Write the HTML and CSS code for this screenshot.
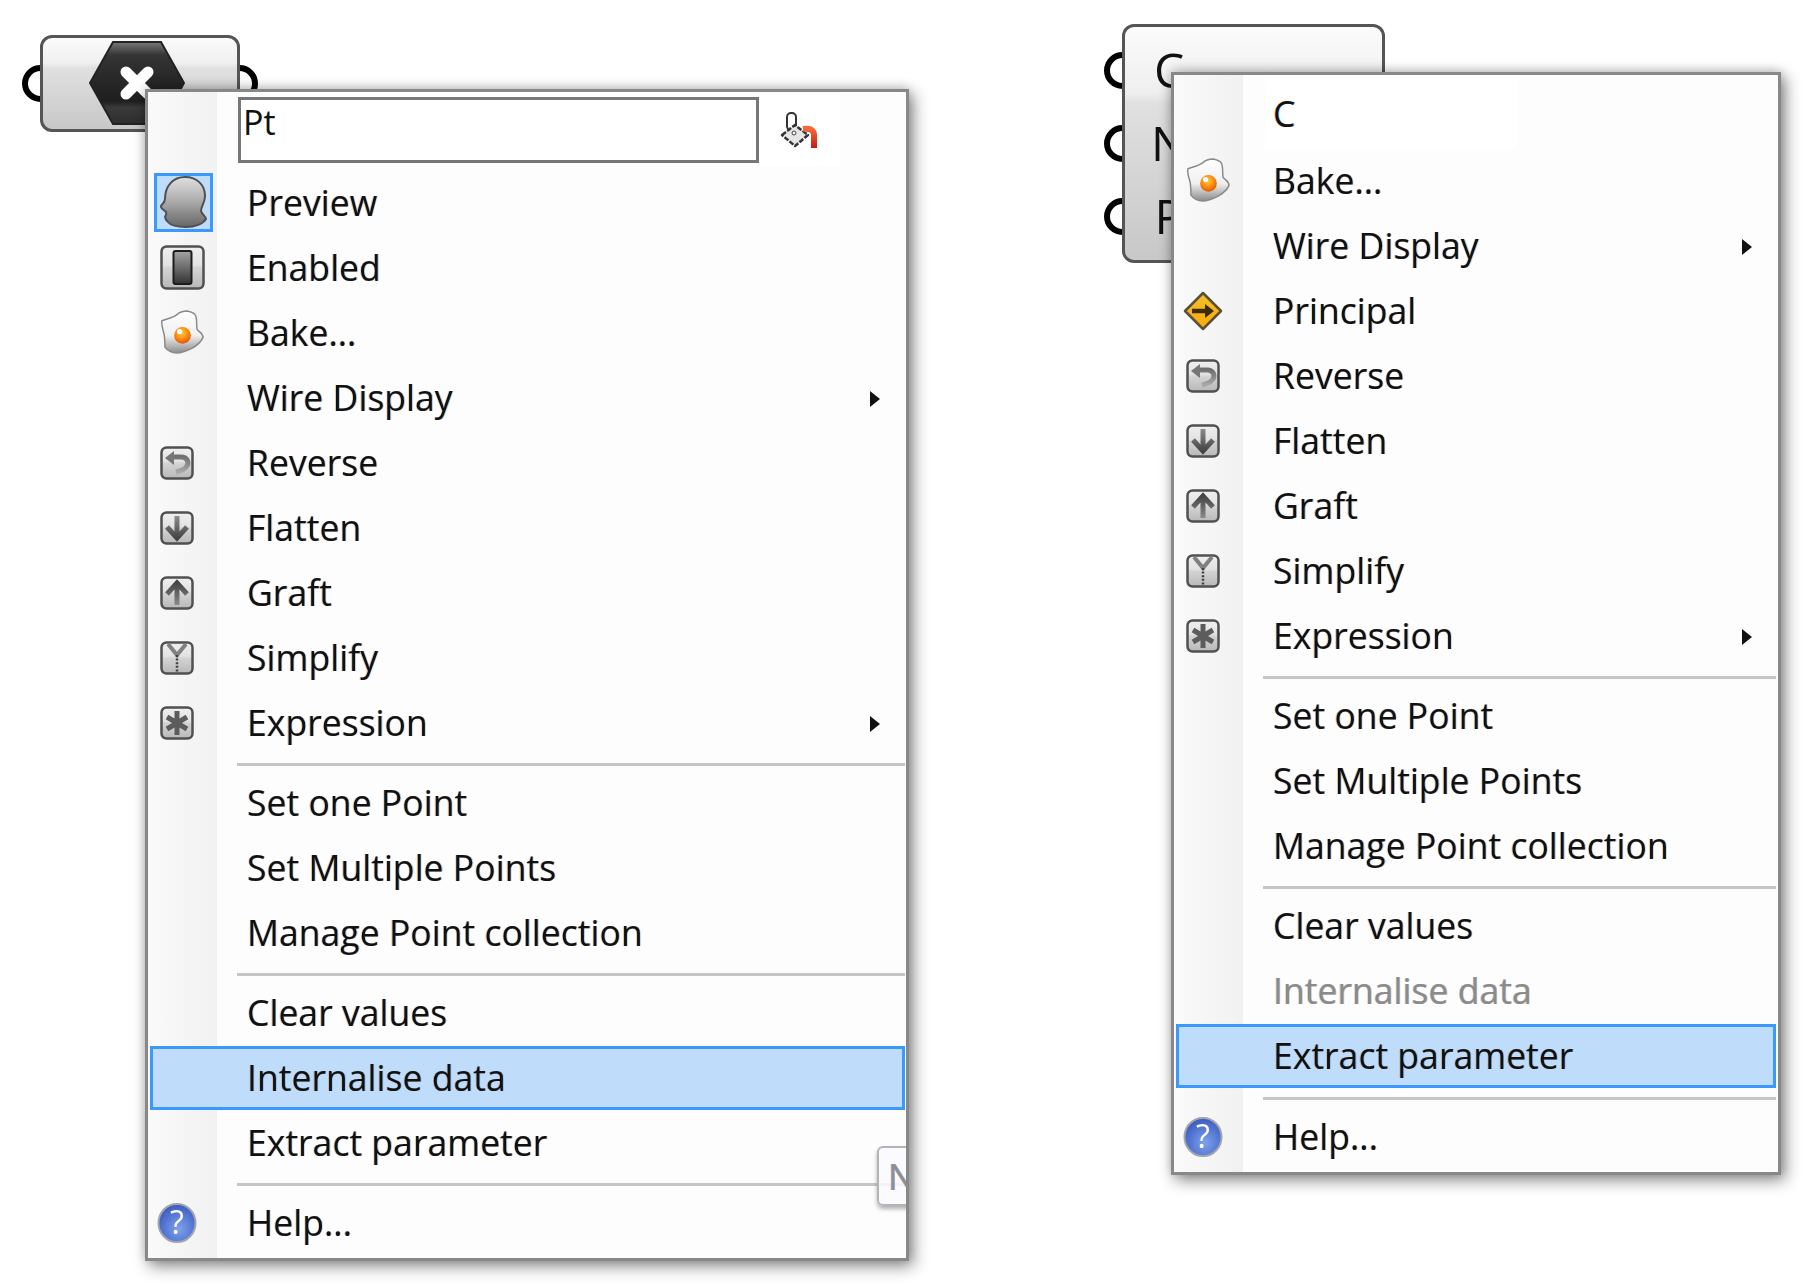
FILE: index.html
```
<!DOCTYPE html>
<html lang="en">
<head>
<meta charset="utf-8">
<title>Grasshopper parameter menus</title>
<link rel="stylesheet" href="styles.css">
</head>
<body>
<svg class="sprite" aria-hidden="true">
  <defs>
    <linearGradient id="btn" x1="0" y1="0" x2="0" y2="1"><stop offset="0" stop-color="#efefef"/><stop offset=".45" stop-color="#e2e2e2"/><stop offset=".5" stop-color="#d4d4d4"/><stop offset="1" stop-color="#b8b8b8"/></linearGradient>
    <linearGradient id="glyph" x1="0" y1="0" x2="0" y2="1"><stop offset="0" stop-color="#8c8c8c"/><stop offset="1" stop-color="#444"/></linearGradient>
    <linearGradient id="glyphUp" x1="0" y1="0" x2="0" y2="1"><stop offset="0" stop-color="#444"/><stop offset="1" stop-color="#8a8a8a"/></linearGradient>
    <linearGradient id="rev" x1="0" y1="0" x2="0" y2="1"><stop offset="0" stop-color="#707070"/><stop offset="1" stop-color="#a8a8a8"/></linearGradient>
    <linearGradient id="head" x1="0" y1="0" x2="0" y2="1"><stop offset="0" stop-color="#e0e0e0"/><stop offset=".45" stop-color="#b0b0b0"/><stop offset="1" stop-color="#666"/></linearGradient>
    <linearGradient id="slot" x1="0" y1="0" x2="0" y2="1"><stop offset="0" stop-color="#a4a4a4"/><stop offset="1" stop-color="#333"/></linearGradient>
    <linearGradient id="hex" x1="0" y1="0" x2="0" y2="1"><stop offset="0" stop-color="#787878"/><stop offset=".16" stop-color="#343434"/><stop offset=".72" stop-color="#1e1e1e"/><stop offset=".8" stop-color="#3a3a3a"/><stop offset="1" stop-color="#2e2e2e"/></linearGradient>
    <linearGradient id="eggw" x1="0" y1="0" x2="0" y2="1"><stop offset="0" stop-color="#fff"/><stop offset=".58" stop-color="#f0f0f0"/><stop offset="1" stop-color="#8c8c8c"/></linearGradient>
    <radialGradient id="yolk" cx=".45" cy=".35" r=".7"><stop offset="0" stop-color="#ffd040"/><stop offset=".55" stop-color="#f98a10"/><stop offset="1" stop-color="#e04a08"/></radialGradient>
    <linearGradient id="sign" x1="0" y1="0" x2="0" y2="1"><stop offset="0" stop-color="#f2c02a"/><stop offset="1" stop-color="#fba90a"/></linearGradient>
    <radialGradient id="ball" cx=".55" cy=".65" r=".7"><stop offset="0" stop-color="#7ea2ee"/><stop offset="1" stop-color="#3555bc"/></radialGradient>
    <linearGradient id="red" x1="0" y1="0" x2="0" y2="1"><stop offset="0" stop-color="#f26a3a"/><stop offset="1" stop-color="#c81a14"/></linearGradient>

    <symbol id="i-head" viewBox="3 3 53 53"><path d="M31 4C43 4 51 12 51 23C51 30 47 33 47 38C48 42 52 43 52 46C49 51 41 54 32 54C24 54 17 53 14 49C12 47 11 46 11 44C12 42 13 41 12 39C10 37 6 35 7 33C9 30 11 29 11 26C11 13 19 4 31 4Z" fill="url(#head)" stroke="#505050" stroke-width="2"/></symbol>
    <symbol id="i-enabled" viewBox="0 0 45 45"><rect x="1.5" y="1.5" width="42" height="42" rx="5" fill="url(#btn)" stroke="#505050" stroke-width="2.5"/><rect x="13.5" y="6" width="18" height="33" rx="2" fill="url(#slot)" stroke="#1c1c1c" stroke-width="2"/></symbol>
    <symbol id="i-egg" viewBox="0 0 46 46"><path d="M2 11C7 9 13 8 17 5C20 2 24 1 28 1C33 2 37 4 37 8C38 12 37 17 38 20C41 23 44 24 44 28C42 33 38 36 33 39C27 42 22 44 17 44C12 44 8 42 5 38C5 32 5 28 4 24C3 20 1 15 2 11Z" fill="url(#eggw)" stroke="#8a8a8a" stroke-width="1.5"/><circle cx="23" cy="26" r="8.5" fill="url(#yolk)"/><circle cx="20" cy="22" r="2.6" fill="#fff"/></symbol>
    <symbol id="i-reverse" viewBox="0 0 34 34"><rect x="1.5" y="1.5" width="31" height="31" rx="5" fill="url(#btn)" stroke="#505050" stroke-width="2.5"/><path d="M13 11H21C28 11 29 17 27 20C25 24 20 25 16 26" fill="none" stroke="url(#rev)" stroke-width="5"/><path d="M5 12L14 5V19Z" fill="#767676"/></symbol>
    <symbol id="i-flatten" viewBox="0 0 34 34"><rect x="1.5" y="1.5" width="31" height="31" rx="5" fill="url(#btn)" stroke="#505050" stroke-width="2.5"/><path d="M17 5V27M7 16L17 27L27 16" fill="none" stroke="url(#glyph)" stroke-width="5"/></symbol>
    <symbol id="i-graft" viewBox="0 0 34 34"><rect x="1.5" y="1.5" width="31" height="31" rx="5" fill="url(#btn)" stroke="#505050" stroke-width="2.5"/><path d="M17 29V8M7 18L17 7L27 18" fill="none" stroke="url(#glyphUp)" stroke-width="5"/></symbol>
    <symbol id="i-simplify" viewBox="0 0 34 34"><rect x="1.5" y="1.5" width="31" height="31" rx="5" fill="url(#btn)" stroke="#505050" stroke-width="2.5"/><path d="M8 3L17 14L26 3" fill="none" stroke="#808080" stroke-width="4"/><path d="M17 14V31" fill="none" stroke="#404040" stroke-width="2.5" stroke-dasharray="2 1.6"/></symbol>
    <symbol id="i-expr" viewBox="0 0 34 34"><rect x="1.5" y="1.5" width="31" height="31" rx="5" fill="url(#btn)" stroke="#505050" stroke-width="2.5"/><path d="M17 5V29M7 11L27 23M27 11L7 23" fill="none" stroke="#5c5c5c" stroke-width="5"/></symbol>
    <symbol id="i-principal" viewBox="0 0 40 40"><path d="M20 2L38 20L20 38L2 20Z" fill="url(#sign)" stroke="#5a5038" stroke-width="2.5" stroke-linejoin="round"/><path d="M9 20H24" stroke="#3a2c08" stroke-width="4.5"/><path d="M22 13L31 20L22 27Z" fill="#3a2c08"/></symbol>
    <symbol id="i-help" viewBox="0 0 40 40"><ellipse cx="20" cy="20" rx="18.5" ry="19" fill="url(#ball)" stroke="#a0a4ae" stroke-width="2"/><text class="help-mark" x="20" y="31" text-anchor="middle">?</text></symbol>
    <symbol id="i-fill" viewBox="0 0 40 40"><rect x="7" y="2" width="9" height="17" rx="4" fill="none" stroke="#333" stroke-width="2"/><path d="M2 24L15 14L28 24L15 35Z" fill="#e6e6e6" stroke="#333" stroke-width="2.5" stroke-linejoin="round" stroke-dasharray="5 1.5"/><circle cx="14" cy="22" r="2" fill="#fff" stroke="#444"/><path d="M23 18C30 17 34 19 34 24V37" fill="none" stroke="url(#red)" stroke-width="6"/></symbol>
    <symbol id="i-hex" viewBox="0 0 96 84"><path d="M24 1H72L95 42L72 83H24L1 42Z" fill="url(#hex)" stroke="#222" stroke-width="2"/><path d="M37 31L59 53M59 31L37 53" stroke="#fff" stroke-width="11" stroke-linecap="round"/></symbol>
  </defs>
</svg>

<main class="canvas">
  <div class="component component-left">
    <div class="ports ports-in"><span class="port"></span></div>
    <div class="ports ports-out"><span class="port"></span></div>
    <div class="face face-left"><svg class="hex"><use href="#i-hex"/></svg></div>
  </div>

  <div class="component component-right">
    <div class="ports ports-in"><span class="port"></span><span class="port"></span><span class="port"></span></div>
    <div class="face face-right">
      <span class="port-name">C</span>
      <span class="port-name">N</span>
      <span class="port-name">P</span>
    </div>
  </div>

  <nav class="menu menu-left">
    <div class="menu-inner">
      <div class="menu-head head-left">
        <div class="name-input">Pt</div>
        <div class="fill-pane"><svg class="ico-fill"><use href="#i-fill"/></svg></div>
      </div>
      <div class="row"><span class="cell"><span class="checked"><svg class="ico-head"><use href="#i-head"/></svg></span></span><span class="label">Preview</span></div>
      <div class="row"><span class="cell"><svg class="ico-45"><use href="#i-enabled"/></svg></span><span class="label">Enabled</span></div>
      <div class="row"><span class="cell"><svg class="ico-45"><use href="#i-egg"/></svg></span><span class="label">Bake...</span></div>
      <div class="row"><span class="cell"></span><span class="label">Wire Display</span><span class="arrow"></span></div>
      <div class="row"><span class="cell"><svg class="ico-34"><use href="#i-reverse"/></svg></span><span class="label">Reverse</span></div>
      <div class="row"><span class="cell"><svg class="ico-34"><use href="#i-flatten"/></svg></span><span class="label">Flatten</span></div>
      <div class="row"><span class="cell"><svg class="ico-34"><use href="#i-graft"/></svg></span><span class="label">Graft</span></div>
      <div class="row"><span class="cell"><svg class="ico-34"><use href="#i-simplify"/></svg></span><span class="label">Simplify</span></div>
      <div class="row"><span class="cell"><svg class="ico-34"><use href="#i-expr"/></svg></span><span class="label">Expression</span><span class="arrow"></span></div>
      <div class="sep"></div>
      <div class="row"><span class="cell"></span><span class="label">Set one Point</span></div>
      <div class="row"><span class="cell"></span><span class="label">Set Multiple Points</span></div>
      <div class="row"><span class="cell"></span><span class="label">Manage Point collection</span></div>
      <div class="sep"></div>
      <div class="row"><span class="cell"></span><span class="label">Clear values</span></div>
      <div class="row active"><span class="cell"></span><span class="label">Internalise data</span></div>
      <div class="row"><span class="cell"></span><span class="label">Extract parameter</span></div>
      <div class="sep"></div>
      <div class="row"><span class="cell"><svg class="ico-40"><use href="#i-help"/></svg></span><span class="label">Help...</span></div>
      <div class="tooltip">N</div>
    </div>
  </nav>

  <nav class="menu menu-right">
    <div class="menu-inner">
      <div class="menu-head head-right"><div class="name-plain">C</div></div>
      <div class="row"><span class="cell"><svg class="ico-45"><use href="#i-egg"/></svg></span><span class="label">Bake...</span></div>
      <div class="row"><span class="cell"></span><span class="label">Wire Display</span><span class="arrow"></span></div>
      <div class="row"><span class="cell"><svg class="ico-40"><use href="#i-principal"/></svg></span><span class="label">Principal</span></div>
      <div class="row"><span class="cell"><svg class="ico-34"><use href="#i-reverse"/></svg></span><span class="label">Reverse</span></div>
      <div class="row"><span class="cell"><svg class="ico-34"><use href="#i-flatten"/></svg></span><span class="label">Flatten</span></div>
      <div class="row"><span class="cell"><svg class="ico-34"><use href="#i-graft"/></svg></span><span class="label">Graft</span></div>
      <div class="row"><span class="cell"><svg class="ico-34"><use href="#i-simplify"/></svg></span><span class="label">Simplify</span></div>
      <div class="row"><span class="cell"><svg class="ico-34"><use href="#i-expr"/></svg></span><span class="label">Expression</span><span class="arrow"></span></div>
      <div class="sep"></div>
      <div class="row"><span class="cell"></span><span class="label">Set one Point</span></div>
      <div class="row"><span class="cell"></span><span class="label">Set Multiple Points</span></div>
      <div class="row"><span class="cell"></span><span class="label">Manage Point collection</span></div>
      <div class="sep"></div>
      <div class="row"><span class="cell"></span><span class="label">Clear values</span></div>
      <div class="row"><span class="cell"></span><span class="label disabled">Internalise data</span></div>
      <div class="row active"><span class="cell"></span><span class="label">Extract parameter</span></div>
      <div class="sep"></div>
      <div class="row"><span class="cell"><svg class="ico-40"><use href="#i-help"/></svg></span><span class="label">Help...</span></div>
    </div>
  </nav>
</main>
</body>
</html>
```
FILE: styles.css
```
* { box-sizing: border-box; }
html, body { margin: 0; padding: 0; background: #fff; }
body { width: 1807px; height: 1287px; overflow: hidden; font-family: "Open Sans", "Noto Sans", sans-serif; color: #111; }
.sprite { position: absolute; width: 0; height: 0; }
.canvas { position: relative; width: 1807px; height: 1287px; filter: blur(.45px); }

/* grasshopper components: ports sit behind the face */
.component { position: absolute; z-index: 1; }
.component-left { left: 40px; top: 35px; width: 200px; height: 97px; }
.component-right { left: 1122px; top: 24px; width: 263px; height: 239px; }
.face { position: relative; height: 100%; border: 3px solid #555; border-radius: 12px; background: linear-gradient(#fbfbfb 0, #efefef 28%, #e0e0e0 33%, #c8c8c8 100%); }
.face-left { display: flex; justify-content: center; padding: 3px 6px 0 0; }
.face-right { display: flex; flex-direction: column; padding-top: 6px; }
.hex { width: 96px; height: 84px; }
.ports { position: absolute; display: flex; flex-direction: column; gap: 36px; }
.ports-in { left: -18px; }
.ports-out { right: -18px; }
.component-left .ports { top: 30px; }
.component-right .ports { top: 28px; }
.port { width: 37px; height: 37px; border: 6px solid #000; border-radius: 50%; background: #fff; }
.port-name { height: 73px; width: 88px; text-align: center; font-size: 48px; line-height: 73px; }

/* menus */
.menu { position: absolute; z-index: 2; border: 3px solid #888; background: #fdfdfd; box-shadow: 4px 5px 15px rgba(0,0,0,.48), 0 -2px 10px rgba(0,0,0,.14); }
.menu-left { left: 145px; top: 89px; width: 764px; }
.menu-right { left: 1171px; top: 72px; width: 610px; }
.menu-inner { position: relative; overflow: hidden; padding-bottom: 3px; background: linear-gradient(90deg, #fafafa, #f1f1f1) 0 0 / 69px 100% no-repeat; }

.menu-head { display: flex; align-items: flex-start; }
.head-left { height: 78px; padding: 5px 0 0 90px; }
.head-right { height: 73px; padding: 3px 0 0 91px; }
.name-input { width: 521px; height: 66px; border: 3px solid #777; background: #fff; padding: 0 0 0 2px; font-size: 34px; line-height: 44px; }
.fill-pane { width: 81px; height: 71px; margin-top: -2px; background: #fff; display: flex; align-items: center; justify-content: center; }
.ico-fill { width: 40px; height: 40px; }
.name-plain { width: 252px; height: 69px; background: #fff; padding-left: 8px; font-size: 35.6px; line-height: 70px; text-shadow: -.8px 0 rgba(200,110,0,.38), .8px 0 rgba(0,110,230,.34); }

.row { position: relative; display: flex; align-items: center; height: 65px; }
.cell { width: 60px; flex: none; display: flex; align-items: center; justify-content: center; }
.label { margin-left: 39px; font-size: 35.6px; line-height: 1; white-space: nowrap; text-shadow: -.8px 0 rgba(200,110,0,.38), .8px 0 rgba(0,110,230,.34); }
.label.disabled { color: #8b8b8b; }
.arrow { position: absolute; right: 26px; margin-top: 3px; width: 0; height: 0; border-left: 10px solid #111; border-top: 8px solid transparent; border-bottom: 8px solid transparent; }

.row.active { height: 64px; margin: 1px 0 0 2px; width: calc(100% - 3px); border: 3px solid #3c99fc; background: #c0dcfb; }
.row.active .cell { width: 55px; }
.menu-right .row.active { width: calc(100% - 4px); }
.row.active + .sep { margin-top: 9px; }
.checked { width: 59px; height: 59px; flex: none; border: 3px solid #3c99fc; background: #c0dcfb; margin-left: 10px; }
.ico-head { display: block; width: 53px; height: 53px; }
.ico-45 { width: 45px; height: 45px; margin-left: 8px; flex: none; }
.ico-34 { width: 34px; height: 34px; margin-right: 2px; }
.ico-40 { width: 40px; height: 40px; margin-right: 2px; }
.help-mark { font-family: "Open Sans", sans-serif; font-size: 32px; font-weight: 400; fill: #fff; }

.sep { height: 3px; margin: 8px 1px 4px 89px; background: #c6c6c6; }
.menu-right .sep { margin-right: 2px; }

.tooltip { position: absolute; left: 729px; top: 1054px; width: 70px; height: 60px; border: 2px solid #b4b4b4; border-radius: 6px; background: rgba(250,250,255,.85); box-shadow: 0 3px 4px rgba(0,0,0,.3); color: #8d8d9c; font-size: 36px; line-height: 58px; padding-left: 9px; text-shadow: -.8px 0 rgba(200,110,0,.5), .8px 0 rgba(0,110,230,.4); }
```
